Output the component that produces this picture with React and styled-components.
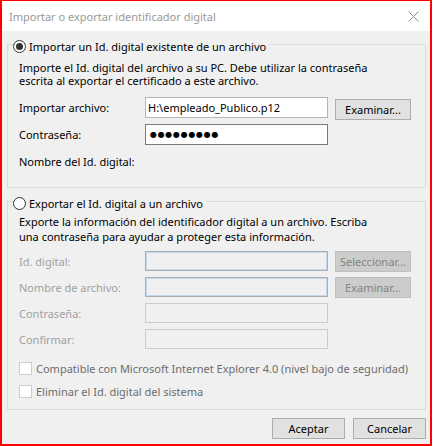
import React from 'react';
import styled, { createGlobalStyle } from 'styled-components';

const GlobalStyle = createGlobalStyle`
    html, body {
        margin: 0;
        padding: 0;
        background: #ffffff;
    }
    body {
        font-family: "Noto Sans", "Liberation Sans", sans-serif;
        font-size: 11px;
        color: #000000;
    }
    * {
        box-sizing: border-box;
    }
`

const App = () => {

    return (
        <>
            <GlobalStyle />
            <Window>
                <TitleBar>
                    <Title>Importar o exportar identificador digital</Title>
                    <CloseButton>
                        <svg width="11" height="11" viewBox="0 0 11 11">
                            <path d="M0.5 0.5 L10.5 10.5 M10.5 0.5 L0.5 10.5" stroke="#8f8f8f" strokeWidth="1" fill="none" />
                        </svg>
                    </CloseButton>
                </TitleBar>

                <Body>
                    <Group $padBottom={15}>
                        <Legend>
                            <Radio $checked />
                            Importar un Id. digital existente de un archivo
                        </Legend>
                        <Description $lh={13} $top={8}>
                            Importe el Id. digital del archivo a su PC. Debe utilizar la contraseña<br />
                            escrita al exportar el certificado a este archivo.
                        </Description>
                        <FormGrid $row={21} $gap={6} $top={10}>
                            <Label>Importar archivo:</Label>
                            <Field>{"H:\\empleado_Publico.p12"}</Field>
                            <Button $offset={2}>Examinar...</Button>

                            <Label>Contraseña:</Label>
                            <Field $focused><Dots>●●●●●●●●●</Dots></Field>
                            <Empty />

                            <Label>Nombre del Id. digital:</Label>
                        </FormGrid>
                    </Group>

                    <Group $padBottom={9} $top={4}>
                        <Legend>
                            <Radio />
                            Exportar el Id. digital a un archivo
                        </Legend>
                        <Description $lh={15} $top={4}>
                            Exporte la información del identificador digital a un archivo. Escriba<br />
                            una contraseña para ayudar a proteger esta información.
                        </Description>
                        <FormGrid $row={20} $gap={6} $top={7}>
                            <Label $disabled>Id. digital:</Label>
                            <Field $variant="inactive" />
                            <Button disabled>Seleccionar...</Button>

                            <Label $disabled>Nombre de archivo:</Label>
                            <Field $variant="inactive" />
                            <Button disabled>Examinar...</Button>

                            <Label $disabled>Contraseña:</Label>
                            <Field $variant="disabled" />
                            <Empty />

                            <Label $disabled>Confirmar:</Label>
                            <Field $variant="disabled" />
                            <Empty />
                        </FormGrid>
                        <CheckList>
                            <CheckRow>
                                <CheckBox />
                                Compatible con Microsoft Internet Explorer 4.0 (nivel bajo de seguridad)
                            </CheckRow>
                            <CheckRow>
                                <CheckBox />
                                Eliminar el Id. digital del sistema
                            </CheckRow>
                        </CheckList>
                    </Group>

                    <Footer>
                        <Button $wide>Aceptar</Button>
                        <Button $wide>Cancelar</Button>
                    </Footer>
                </Body>
            </Window>
        </>
    )
}



const Window = styled.div`
    width: 432px;
    height: 446px;
    display: flex;
    flex-direction: column;
    border: 2px solid #ff0000;
    border-top-width: 1px;
    background: #f0f0f0;
`

const TitleBar = styled.div`
    height: 30px;
    flex-shrink: 0;
    display: flex;
    align-items: center;
    justify-content: space-between;
    padding: 0 11px 0 7px;
    background: #ffffff;
`

const Title = styled.div`
    color: #999999;
    font-size: 11px;
`

const CloseButton = styled.div`
    display: flex;
    align-items: center;
`

const Body = styled.div`
    flex: 1;
    display: flex;
    flex-direction: column;
    padding: 4px 4px 0 5px;
`

const Group = styled.fieldset`
    margin: ${p => p.$top || 0}px 0 0 0;
    padding: 0 11px ${p => p.$padBottom}px 11px;
    border: 1px solid #dcdcdc;
    min-width: 0;
`

const Legend = styled.legend`
    display: flex;
    align-items: center;
    gap: 3px;
    height: 18px;
    padding: 5px 3px 0 0;
    margin-left: -6px;
    white-space: nowrap;
`

const Radio = styled.span`
    width: 13px;
    height: 13px;
    flex-shrink: 0;
    border-radius: 50%;
    border: 1px solid #333333;
    background: #ffffff;
    display: flex;
    align-items: center;
    justify-content: center;

    &::after {
        content: "";
        display: ${p => p.$checked ? 'block' : 'none'};
        width: 7px;
        height: 7px;
        border-radius: 50%;
        background: #333333;
    }
`

const Description = styled.p`
    margin: ${p => p.$top}px 0 0 0;
    line-height: ${p => p.$lh}px;
    white-space: nowrap;
`

const FormGrid = styled.div`
    margin-top: ${p => p.$top}px;
    display: grid;
    grid-template-columns: 119px 183px 76px;
    column-gap: 7px;
    row-gap: ${p => p.$gap}px;
    grid-auto-rows: ${p => p.$row}px;
`

const Label = styled.div`
    display: flex;
    align-items: center;
    white-space: nowrap;
    color: ${p => p.$disabled ? '#a0a0a0' : '#000000'};
`

const fieldStyles = {
    normal: 'border: 1px solid #b4b4b4; background: #ffffff;',
    focused: 'border: 1px solid #7a7a7a; background: #ffffff;',
    inactive: 'border: 1px solid #adadad; background: #f0f0f0; box-shadow: inset 0 0 0 1px #c3d9ef;',
    disabled: 'border: 1px solid #cccccc; background: #f0f0f0;',
}

const Field = styled.div`
    display: flex;
    align-items: center;
    padding: 0 2px;
    white-space: nowrap;
    ${p => fieldStyles[p.$variant || (p.$focused ? 'focused' : 'normal')]}
`

const Dots = styled.span`
    font-family: "DejaVu Sans", sans-serif;
    font-size: 8px;
    letter-spacing: 0.7px;
    padding-left: 2px;
`

const Empty = styled.div``

const Button = styled.button`
    font-family: inherit;
    font-size: 11px;
    height: 21px;
    width: ${p => p.$wide ? '73px' : '76px'};
    margin-top: ${p => p.$offset || 0}px;
    padding: 0;
    color: #000000;
    background: #e1e1e1;
    border: 1px solid #adadad;
    border-radius: 0;

    &:disabled {
        color: #838383;
        background: #cccccc;
        border-color: #bfbfbf;
    }
`

const CheckList = styled.div`
    margin-top: 11px;
    display: flex;
    flex-direction: column;
    gap: 6px;
`

const CheckRow = styled.label`
    height: 17px;
    display: flex;
    align-items: center;
    gap: 4px;
    color: #6d6d6d;
    white-space: nowrap;
`

const CheckBox = styled.span`
    width: 13px;
    height: 13px;
    flex-shrink: 0;
    background: #ffffff;
    border: 1px solid #cccccc;
`

const Footer = styled.div`
    margin-top: 8px;
    display: flex;
    justify-content: flex-end;
    gap: 8px;
`

export default App;
